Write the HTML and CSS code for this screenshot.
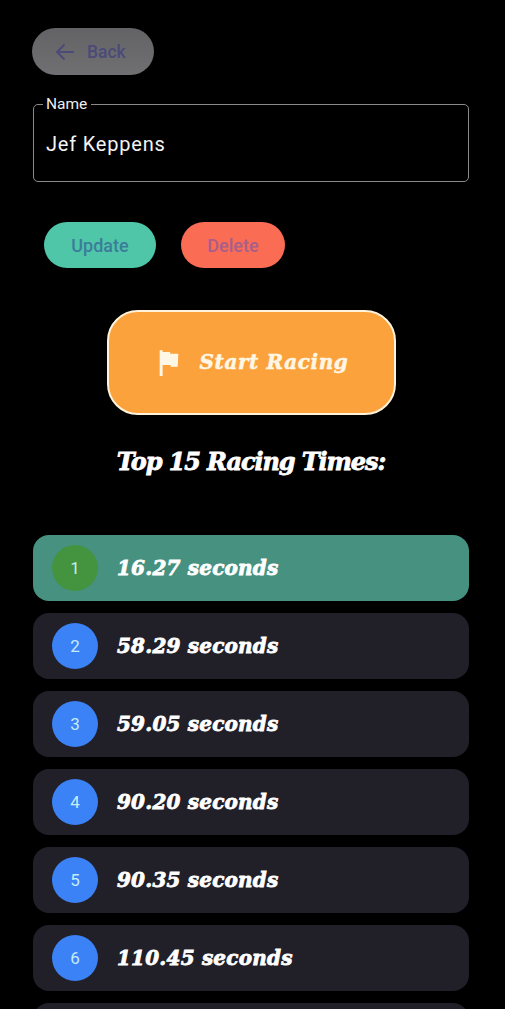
FILE: index.html
```html
<!DOCTYPE html>
<html lang="en">
<head>
    <meta charset="UTF-8">
    <meta name="viewport" content="width=device-width, initial-scale=1.0">
    <title>Profile</title>
    <link rel="stylesheet" href="styles.css">
</head>
<body>
    <div class="page">
        <button class="back-btn">
            <svg width="24" height="24" viewBox="0 0 24 24" fill="none" stroke="currentColor" stroke-width="2"><path d="M21 12H4M11.500 4.500L4 12l7.500 7.500"/></svg>
            <span>Back</span>
        </button>

        <fieldset class="name-field">
            <legend>Name</legend>
            <div class="name-value">Jef Keppens</div>
        </fieldset>

        <div class="action-row">
            <button class="pill-btn update-btn">Update</button>
            <button class="pill-btn delete-btn">Delete</button>
        </div>

        <button class="race-btn">
            <svg width="28" height="28" viewBox="0 0 24 24" fill="currentColor"><path d="M4 2h2.500v1.500h6.500V5h7l-.5 11H13.500v-1.500H6.500V24H4z"/></svg>
            <span>Start Racing</span>
        </button>

        <h2 class="times-title">Top 15 Racing Times:</h2>

        <div class="times-list">
            <div class="time-row first">
                <div class="rank">1</div>
                <div class="time">16.27 seconds</div>
            </div>
            <div class="time-row">
                <div class="rank">2</div>
                <div class="time">58.29 seconds</div>
            </div>
            <div class="time-row">
                <div class="rank">3</div>
                <div class="time">59.05 seconds</div>
            </div>
            <div class="time-row">
                <div class="rank">4</div>
                <div class="time">90.20 seconds</div>
            </div>
            <div class="time-row">
                <div class="rank">5</div>
                <div class="time">90.35 seconds</div>
            </div>
            <div class="time-row">
                <div class="rank">6</div>
                <div class="time">110.45 seconds</div>
            </div>
            <div class="time-row"></div>
        </div>
    </div>
</body>
</html>
```

FILE: styles.css
```css
html, body {
    height: 100%;
}
body {
    margin: 0;
    background: #000;
    overflow: hidden;
    font-family: Roboto, "Liberation Sans", sans-serif;
}
.page {
    height: 1009px;
    overflow: hidden;
    padding: 28px 36px 0 33px;
    box-sizing: border-box;
    display: flex;
    flex-direction: column;
}
.page > * {
    flex: none;
}
button {
    border: none;
    font-family: inherit;
}
.back-btn {
    width: 122px;
    height: 47px;
    margin-left: -1px;
    padding: 0 0 0 21px;
    border-radius: 24px;
    background: linear-gradient(#636366, #707073);
    color: #4b4a78;
    display: flex;
    align-items: center;
    gap: 10px;
    font-size: 17.500px;
    font-weight: 500;
}
.name-field {
    margin: 21px 0 0;
    padding: 0 0 0 9px;
    height: 86px;
    box-sizing: border-box;
    border: 1px solid #8a8a8a;
    border-radius: 5px;
    color: #fff;
}
.name-field legend {
    padding: 0 4px 0 3px;
    font-size: 15.500px;
    line-height: 16px;
    color: #eee;
}
.name-value {
    margin: 20px 0 0 3px;
    font-size: 20px;
    line-height: 24px;
    letter-spacing: 0.8px;
    color: #f4f4f4;
}
.action-row {
    display: flex;
    gap: 25px;
    margin: 40px 0 0 11px;
}
.pill-btn {
    height: 46px;
    border-radius: 23px;
    font-size: 18px;
    font-weight: 500;
}
.update-btn {
    width: 112px;
    background: #4fc6a8;
    color: #3b7d99;
}
.delete-btn {
    width: 104px;
    background: #fb6c54;
    color: #a75f8c;
}
.race-btn {
    align-self: flex-start;
    width: 289px;
    height: 105px;
    margin: 42px 0 0 74px;
    border: 2.500px solid #fff3dc;
    border-radius: 31px;
    background: #fba23c;
    color: #fff7e6;
    display: flex;
    align-items: center;
    justify-content: center;
    gap: 17px;
    padding: 0 0 2px 0;
    font-family: "DejaVu Serif", serif;
    font-size: 20px;
    font-weight: 700;
    font-style: italic;
}
.race-btn span {
    letter-spacing: 0.6px;
    -webkit-text-stroke: 0.5px #fff7e6;
}
.times-title {
    margin: 30px 0 0;
    text-align: center;
    font-family: "DejaVu Serif", serif;
    font-size: 24px;
    line-height: 34px;
    font-weight: 700;
    font-style: italic;
    color: #fff;
    letter-spacing: -1.1px;
    -webkit-text-stroke: 0.8px #fff;
}
.times-list {
    display: flex;
    flex-direction: column;
    gap: 12px;
    margin-top: 56px;
}
.time-row {
    flex: none;
    height: 66px;
    border-radius: 16px;
    background: #211f27;
    display: flex;
    align-items: center;
    padding-left: 19px;
    gap: 19px;
}
.time-row.first {
    background: #46917f;
}
.rank {
    width: 46px;
    height: 46px;
    border-radius: 50%;
    background: #3b82f6;
    color: #c4ecf8;
    display: flex;
    align-items: center;
    justify-content: center;
    font-size: 17px;
}
.first .rank {
    background: #44943f;
}
.time {
    font-family: "DejaVu Serif", serif;
    font-size: 20px;
    font-weight: 700;
    font-style: italic;
    color: #fff;
    letter-spacing: 0.2px;
    -webkit-text-stroke: 0.8px #fff;
}
```
